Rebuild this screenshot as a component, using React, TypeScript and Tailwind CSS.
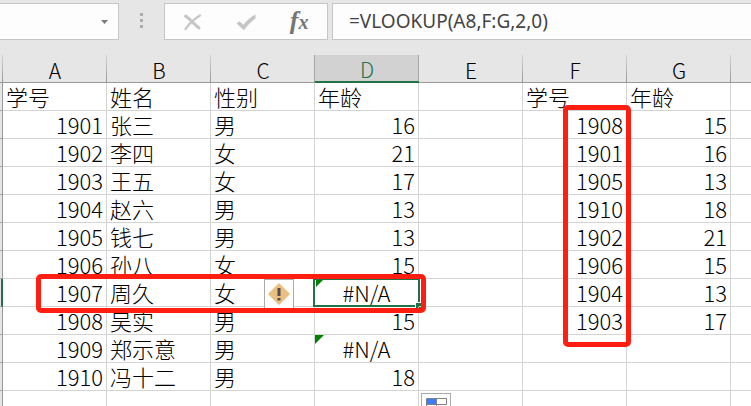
import { ReactNode } from "react";
import clsx from "clsx";

type TRow = {
  id?: string,
  name?: string,
  gender?: string,
  age?: string,
  lookupId?: string,
  lookupAge?: string,
  header?: boolean
}

const COLUMNS = ["A", "B", "C", "D", "E", "F", "G"];

const ACTIVE_ROW = 7;

const ROWS: TRow[] = [
  { id: "学号", name: "姓名", gender: "性别", age: "年龄", lookupId: "学号", lookupAge: "年龄", header: true },
  { id: "1901", name: "张三", gender: "男", age: "16", lookupId: "1908", lookupAge: "15" },
  { id: "1902", name: "李四", gender: "女", age: "21", lookupId: "1901", lookupAge: "16" },
  { id: "1903", name: "王五", gender: "女", age: "17", lookupId: "1905", lookupAge: "13" },
  { id: "1904", name: "赵六", gender: "男", age: "13", lookupId: "1910", lookupAge: "18" },
  { id: "1905", name: "钱七", gender: "男", age: "13", lookupId: "1902", lookupAge: "21" },
  { id: "1906", name: "孙八", gender: "女", age: "15", lookupId: "1906", lookupAge: "15" },
  { id: "1907", name: "周久", gender: "女", age: "#N/A", lookupId: "1904", lookupAge: "13" },
  { id: "1908", name: "吴实", gender: "男", age: "15", lookupId: "1903", lookupAge: "17" },
  { id: "1909", name: "郑示意", gender: "男", age: "#N/A" },
  { id: "1910", name: "冯十二", gender: "男", age: "18" },
  {},
];

export default function App() {
  return (
    <main className="h-screen overflow-hidden bg-[#e6e6e6] font-['Noto_Sans_CJK_SC',sans-serif] text-black">
      <FormulaBar />
      <Sheet />
    </main>
  );
}

function FormulaBar() {
  return (
    <div className="flex h-[55px] pt-[3px]">
      <div className="flex h-[37px] w-[119px] shrink-0 border border-l-0 border-[#c6c6c6] bg-[#fdfdfd]">
        <input aria-label="名称框" className="min-w-0 flex-1 bg-transparent px-2 outline-none" />
        <button aria-label="展开名称框" className="flex w-7 items-center justify-center">
          <svg width="7" height="4" viewBox="0 0 7 4" fill="#777b80">
            <path d="M0 0h7L3.5 4z" />
          </svg>
        </button>
      </div>

      <div className="flex h-[35px] w-[45px] shrink-0 flex-col items-center justify-center gap-[3px]">
        <span className="size-[3px] bg-[#adadad]" />
        <span className="size-[3px] bg-[#adadad]" />
        <span className="size-[3px] bg-[#adadad]" />
      </div>

      <div className="flex h-[37px] w-[164px] shrink-0 items-center justify-around border border-[#c6c6c6] bg-[#fdfdfd]">
        <button aria-label="取消">
          <svg width="20" height="18" viewBox="0 0 20 18" fill="none" stroke="#c6c6c6" strokeLinecap="round">
            <path d="M3.500 3C8 6 12 11 17 15" strokeWidth="3" />
            <path d="M18 2.500C12 6 7 11 3.500 16" strokeWidth="2.200" />
          </svg>
        </button>
        <button aria-label="输入">
          <svg width="22" height="18" viewBox="0 0 22 18" fill="#c6c6c6">
            <path d="M1.500 10.500L4.500 8.200L8.500 11.800C11.500 7.500 15.500 4 20.500 1.500V5.500C16 8.500 12.500 12.500 9 17.200Z" />
          </svg>
        </button>
        <button
          aria-label="插入函数"
          className="pr-[2px] font-['Liberation_Serif',serif] text-[26px] leading-[30px] font-bold text-[#757575] italic"
        >
          f<span className="text-[20px]">x</span>
        </button>
      </div>

      <input
        aria-label="编辑栏"
        defaultValue="=VLOOKUP(A8,F:G,2,0)"
        className="ml-1 h-[37px] min-w-0 flex-1 border border-r-0 border-[#c6c6c6] bg-[#fdfdfd] px-4 pb-[2px] font-['Noto_Sans',sans-serif] text-[19px] text-[#444] outline-none"
      />
    </div>
  );
}

function Sheet() {
  return (
    <div className="relative">
      <table className="w-full table-fixed border-separate border-spacing-0 bg-white">
        <colgroup>
          <col className="w-[3px]" />
          {COLUMNS.map((column) => <col key={column} className="w-[104px]" />)}
          <col />
        </colgroup>
        <thead>
          <tr className="h-7">
            <ColumnHeader />
            {COLUMNS.map((column) => (
              <ColumnHeader key={column} active={column === "D"}>{column}</ColumnHeader>
            ))}
            <ColumnHeader last />
          </tr>
        </thead>
        <tbody>
          {ROWS.map((row, index) => (
            <tr key={index} className="h-7">
              <td
                className={clsx(
                  "border-r border-b border-b-[#a0a0a0] bg-[#e6e6e6] p-0",
                  index === ACTIVE_ROW ? "border-r-2 border-r-[#217346]" : "border-r-[#999]"
                )}
              />
              <Cell numeric={!row.header}>{row.id}</Cell>
              <Cell>{row.name}</Cell>
              <Cell>
                {row.gender}
                {index === ACTIVE_ROW && <ErrorButton />}
              </Cell>
              <Cell numeric={!row.header} error={row.age === "#N/A"} selected={index === ACTIVE_ROW}>
                {row.age}
              </Cell>
              <Cell>{index === ROWS.length - 1 && <FillOptions />}</Cell>
              <Cell numeric={!row.header}>{row.lookupId}</Cell>
              <Cell numeric={!row.header}>{row.lookupAge}</Cell>
              <Cell last />
            </tr>
          ))}
        </tbody>
      </table>

      {/* red marks over the failing row and the lookup column */}
      <div className="pointer-events-none absolute top-[219px] left-9 h-[39px] w-[390px] rounded-[5px] border-5 border-[#ff1e10]" />
      <div className="pointer-events-none absolute top-[50px] left-[563px] h-[242px] w-[68px] rounded-[5px] border-5 border-[#ff1e10]" />
    </div>
  );
}

function ColumnHeader({ children, active, last }: {
  children?: ReactNode,
  active?: boolean,
  last?: boolean
}) {
  return (
    <th
      scope="col"
      className={clsx(
        "relative h-7 p-0 text-[21px] font-light",
        active
          ? "border-b-2 border-[#217346] bg-[#d2d2d2] text-[#217346]"
          : "border-b border-[#999] bg-[#e6e6e6]"
      )}
    >
      {children && <div className="h-[26px] leading-[28px]">{children}</div>}
      {active && <span className="absolute inset-y-0 -left-px w-px bg-[#a6a6a6]" />}
      {!last && (
        <span
          className={clsx(
            "absolute inset-y-0 right-0 w-px",
            active ? "bg-[#a6a6a6]" : "bg-linear-to-b from-[#d4d4d4] to-[#999]"
          )}
        />
      )}
    </th>
  );
}

function Cell({ children, numeric, error, selected, last }: {
  children?: ReactNode,
  numeric?: boolean,
  error?: boolean,
  selected?: boolean,
  last?: boolean
}) {
  return (
    <td
      className={clsx(
        "relative h-7 border-b border-[#d4d4d4] p-0 text-[22px] font-light whitespace-nowrap",
        !last && "border-r",
        error ? "text-center" : numeric ? "text-right" : "text-left"
      )}
    >
      {children && <div className="h-[27px] px-[3px] leading-[27px]">{children}</div>}
      {selected && (
        <>
          <span className="absolute -top-px -right-[2px] -bottom-px -left-[2px] border-2 border-[#217346]" />
          <span className="absolute -right-1 -bottom-[3px] size-[7px] border-t border-l border-white bg-[#217346]" />
        </>
      )}
      {error && (
        <svg
          className={clsx("absolute", selected ? "top-px left-px" : "top-0 left-0")}
          width={selected ? 7 : 9}
          height={selected ? 7 : 9}
          viewBox="0 0 9 9"
          fill="#008000"
        >
          <path d="M0 0h9L0 9z" />
        </svg>
      )}
    </td>
  );
}

function ErrorButton() {
  return (
    <button
      aria-label="错误检查选项"
      className="absolute top-0 right-5 flex size-[30px] items-center justify-center border border-[#ababab] bg-[#fdfdfd]"
    >
      <svg width="22" height="22" viewBox="0 0 22 22">
        <path d="M11 1L21 11L11 21L1 11Z" fill="#eabf7f" stroke="#eabf7f" strokeWidth="1.500" strokeLinejoin="round" />
        <path d="M9.500 5h3v8h-3zM9.500 15h3v2.500h-3z" fill="#505050" />
      </svg>
    </button>
  );
}

function FillOptions() {
  return (
    <button
      aria-label="自动填充选项"
      className="absolute top-[2px] left-[2px] flex size-[30px] justify-center border border-[#ababab] bg-[#fdfdfd] pt-1"
    >
      <svg width="21" height="20" viewBox="0 0 21 20">
        <path d="M.5.5h20v6H.5zM.5 6.500h10v6H.5zM.5 12.500h10v6H.5z" fill="#fff" stroke="#808080" />
        <path d="M1 1h9v5H1z" fill="#3b7cff" />
        <path d="M10.500 1v5" stroke="#808080" />
      </svg>
    </button>
  );
}
